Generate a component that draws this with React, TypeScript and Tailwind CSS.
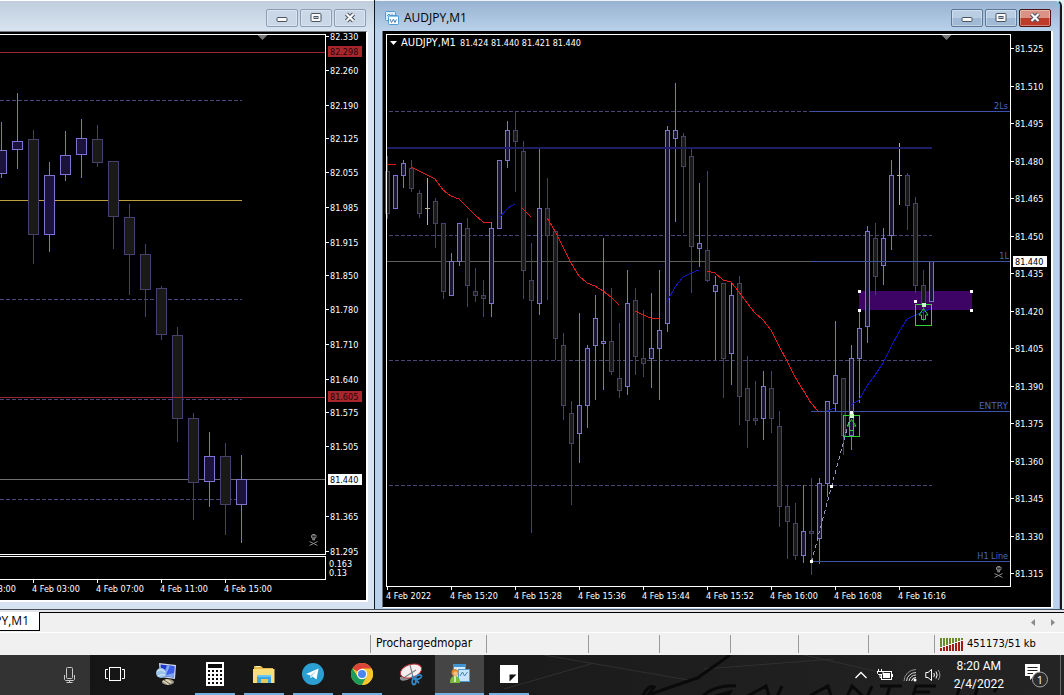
import React from 'react';

type Candle = [x: number, high: number, top: number, bottom: number, low: number, kind: 'u' | 'd' | 'n'];
type Tick = [label: string, y: number];

const LEFT_CANDLES: Candle[] = [
  [1, 122, 150, 173, 177, 'u'], [17, 93, 141, 149, 168, 'u'], [33, 130, 139, 234, 263, 'd'],
  [49, 162, 175, 234, 251, 'u'], [65, 131, 155, 174, 180, 'u'], [81, 119, 138, 154, 177, 'u'],
  [97, 125, 139, 162, 166, 'd'], [113, 161, 161, 216, 248, 'd'], [129, 204, 217, 254, 294, 'd'],
  [145, 244, 254, 289, 316, 'd'], [161, 286, 288, 334, 339, 'd'], [177, 327, 335, 418, 441, 'd'],
  [193, 413, 418, 482, 519, 'd'], [209, 432, 456, 481, 506, 'u'], [225, 443, 456, 504, 534, 'd'],
  [241, 455, 479, 504, 542, 'u'],
];

const RIGHT_CANDLES: Candle[] = [
  [387, 156, 171, 213, 218, 'd'], [395, 175, 175, 208, 208, 'u'], [403, 160, 163, 175, 187, 'u'],
  [411, 160, 168, 188, 191, 'd'], [419, 190, 193, 213, 217, 'd'], [427, 178, 208, 208, 224, 'n'],
  [435, 198, 201, 223, 247, 'd'], [443, 223, 223, 291, 298, 'd'], [451, 253, 261, 295, 295, 'u'],
  [459, 223, 223, 261, 265, 'u'], [467, 218, 228, 285, 306, 'd'], [475, 268, 291, 295, 301, 'd'],
  [483, 280, 295, 298, 316, 'd'], [491, 222, 228, 303, 316, 'u'], [499, 160, 160, 228, 228, 'u'],
  [507, 121, 130, 160, 167, 'u'], [515, 111, 130, 141, 191, 'd'], [523, 141, 151, 270, 298, 'd'],
  [531, 243, 280, 300, 532, 'd'], [539, 148, 208, 303, 314, 'u'], [547, 178, 208, 235, 299, 'd'],
  [555, 231, 231, 338, 359, 'd'], [563, 333, 345, 405, 419, 'd'], [571, 401, 413, 443, 504, 'd'],
  [579, 313, 405, 433, 462, 'u'], [587, 345, 348, 405, 427, 'u'], [595, 295, 318, 345, 399, 'u'],
  [603, 238, 341, 343, 389, 'u'], [611, 288, 341, 371, 374, 'd'], [619, 323, 378, 390, 397, 'd'],
  [627, 270, 303, 386, 394, 'u'], [635, 288, 300, 356, 374, 'd'], [643, 310, 358, 363, 376, 'd'],
  [651, 293, 348, 358, 387, 'u'], [659, 270, 330, 348, 399, 'u'], [667, 126, 130, 323, 331, 'u'],
  [675, 83, 130, 138, 221, 'u'], [683, 133, 136, 166, 232, 'd'], [691, 149, 156, 246, 292, 'd'],
  [699, 183, 243, 248, 266, 'u'], [707, 171, 250, 280, 281, 'd'], [715, 276, 285, 291, 359, 'u'],
  [723, 283, 283, 358, 397, 'd'], [731, 282, 295, 353, 384, 'u'], [739, 276, 283, 396, 424, 'd'],
  [747, 356, 388, 420, 447, 'd'], [755, 381, 418, 420, 424, 'd'], [763, 371, 386, 418, 439, 'u'],
  [771, 371, 388, 418, 432, 'd'], [779, 411, 426, 506, 526, 'd'], [787, 486, 506, 521, 558, 'd'],
  [795, 503, 523, 555, 559, 'd'], [803, 485, 531, 555, 562, 'u'], [811, 478, 531, 533, 574, 'd'],
  [819, 478, 483, 538, 563, 'u'], [827, 401, 401, 483, 496, 'u'], [835, 321, 375, 403, 411, 'u'],
  [843, 378, 378, 435, 454, 'd'], [851, 345, 358, 435, 449, 'u'], [859, 311, 328, 358, 402, 'u'],
  [867, 226, 231, 326, 342, 'u'], [875, 223, 238, 276, 294, 'd'], [883, 228, 238, 265, 284, 'u'],
  [891, 160, 175, 235, 249, 'u'], [899, 143, 175, 175, 204, 'n'], [907, 173, 175, 205, 229, 'd'],
  [915, 197, 203, 285, 292, 'd'], [923, 270, 285, 304, 320, 'd'], [931, 261, 261, 301, 301, 'u'],
];

const LEFT_TICKS: Tick[] = [
  ['82.330', 36], ['82.260', 70], ['82.190', 105], ['82.125', 138], ['82.055', 172], ['81.985', 207],
  ['81.915', 242], ['81.850', 275], ['81.780', 309], ['81.710', 344], ['81.640', 379], ['81.575', 412],
  ['81.505', 446], ['81.365', 516], ['81.295', 551],
];

const RIGHT_TICKS: Tick[] = [
  ['81.525', 48], ['81.510', 86], ['81.495', 123], ['81.480', 161], ['81.465', 198], ['81.450', 236],
  ['81.435', 273], ['81.420', 311], ['81.405', 348], ['81.390', 386], ['81.375', 423], ['81.360', 461],
  ['81.345', 498], ['81.330', 536], ['81.315', 573],
];

const LEFT_TIMES: [string, number][] = [
  ['3 Feb 23:00', -31], ['4 Feb 03:00', 33], ['4 Feb 07:00', 97], ['4 Feb 11:00', 161], ['4 Feb 15:00', 225],
];

const RIGHT_TIMES: [string, number][] = [
  ['4 Feb 2022', 387], ['4 Feb 15:20', 451], ['4 Feb 15:28', 515], ['4 Feb 15:36', 579], ['4 Feb 15:44', 643],
  ['4 Feb 15:52', 707], ['4 Feb 16:00', 771], ['4 Feb 16:08', 835], ['4 Feb 16:16', 899],
];

const CHART_TEXT = "font-['DejaVu_Sans_Condensed','DejaVu_Sans',sans-serif] text-[9px]";

const COLORS = {
  u: { line: '#7d72d6', fill: '#1b1338' },
  d: { line: '#45406e', fill: '#1a1a1c' },
  n: { line: '#b5b596', fill: '#b5b596' },
};

function Candles({ data, half }: { data: Candle[]; half: number }) {
  return (
    <g shapeRendering="crispEdges">
      {data.map(([x, high, top, bottom, low, kind]) => {
        const c = COLORS[kind];
        return (
          <g key={x}>
            <rect x={x} y={high} width={1} height={low - high + 1} fill={c.line} />
            {kind === 'n' ? (
              <rect x={x - 2} y={top} width={5} height={1} fill={c.line} />
            ) : (
              <>
                <rect x={x - half} y={top} width={half * 2 + 1} height={bottom - top + 1} fill={c.line} />
                <rect x={x - half + 1} y={top + 1} width={half * 2 - 1} height={Math.max(bottom - top - 1, 0)} fill={c.fill} />
              </>
            )}
          </g>
        );
      })}
    </g>
  );
}

function PriceScale({ x, ticks }: { x: number; ticks: Tick[] }) {
  return (
    <g fill="#fff">
      {ticks.map(([label, y]) => (
        <g key={label}>
          <rect x={x} y={y} width={3} height={1} />
          <text x={x + 4} y={y + 4}>{label}</text>
        </g>
      ))}
    </g>
  );
}

function PriceTag({ x, y, label, fill, ink }: { x: number; y: number; label: string; fill: string; ink: string }) {
  return (
    <g>
      <rect x={x} y={y - 5} width={34} height={11} fill={fill} />
      <text x={x + 2} y={y + 4} fill={ink}>{label}</text>
    </g>
  );
}

function HLine({ x1, x2, y, color, h = 1 }: { x1: number; x2: number; y: number; color: string; h?: number }) {
  return <rect x={x1} y={y} width={x2 - x1} height={h} fill={color} shapeRendering="crispEdges" />;
}

function Dashes({ x1, x2, ys }: { x1: number; x2: number; ys: number[] }) {
  return (
    <>
      {ys.map((y) => (
        <path key={y} d={`M${x1} ${y + 0.5}H${x2}`} stroke="#4a4678" strokeDasharray="4 2" />
      ))}
    </>
  );
}

function Skull({ x, y }: { x: number; y: number }) {
  return (
    <g transform={`translate(${x} ${y})`} fill="none" stroke="#8a8a8a">
      <path d="M2.5 3.5V1.500L3.500.5H6L7 1.500V3.500L5.500 4.500V6H3.800V4.500Z" fill="#5c5c5c" />
      <path d="M3.500 2.500h1M5.500 2.500h1" stroke="#000" />
      <path d="M.5 7.500L8.500 11.500M.5 11.500L8.500 7.500" />
    </g>
  );
}

function EntryArrow({ x, y }: { x: number; y: number }) {
  return (
    <g transform={`translate(${x} ${y})`} fill="none" stroke="#2fd43c">
      <rect x=".5" y=".5" width="16" height="21" />
      <path d="M8.500 4.500L13 11H10.500V15.500H6.500V11H4Z" />
      <rect x="7" y="-1" width="4" height="4" fill="#c8ffc8" stroke="none" />
    </g>
  );
}

function LeftChart() {
  return (
    <svg viewBox="0 32 366 568" className={`block h-auto w-full bg-black ${CHART_TEXT}`} role="img" aria-label="Hourly chart">
      <HLine x1={0} x2={325} y={52} color="#9c2630" />
      <HLine x1={0} x2={242} y={200} color="#c0a03c" />
      <Dashes x1={0} x2={242} ys={[100, 299, 399, 499]} />
      <HLine x1={0} x2={325} y={479} color="#6e6e70" />
      <Candles data={LEFT_CANDLES} half={5} />
      <HLine x1={0} x2={325} y={397} color="#9c2630" />
      <path d="M257.500 35H267.500L262.500 40Z" fill="#777" />
      <Skull x={309} y={534} />
      <g fill="#fff" shapeRendering="crispEdges">
        <rect x="0" y="34" width="326" height="1" />
        <rect x="325" y="34" width="1" height="521" />
        <rect x="0" y="554" width="326" height="1" />
        <rect x="0" y="556" width="326" height="1" />
        <rect x="325" y="556" width="1" height="24" />
        <rect x="0" y="579" width="326" height="1" />
      </g>
      <PriceScale x={326} ticks={LEFT_TICKS} />
      <PriceTag x={328} y={51} label="82.298" fill="#a8262c" ink="#2a0508" />
      <PriceTag x={328} y={396} label="81.605" fill="#a8262c" ink="#2a0508" />
      <PriceTag x={328} y={479} label="81.440" fill="#fff" ink="#000" />
      <g fill="#fff">
        <text x="329" y="567">0.163</text>
        <text x="329" y="576">0.13</text>
        {LEFT_TIMES.map(([label, x]) => (
          <g key={label}>
            <rect x={x} y="580" width="1" height="3" />
            <text x={x - 1} y="592">{label}</text>
          </g>
        ))}
      </g>
    </svg>
  );
}

const RED_LINES = [
  '387,164 391,164 396,165',
  '411,167 419,171 427,175 435,179 443,190 451,196 459,199 467,207 475,215 483,222 491,222',
  '521,207 526,212 531,217',
  '547,218 555,231 563,247 571,263 579,276 587,283 595,286 603,291 611,297 619,305',
  '635,311 643,315 651,318 660,319',
  '707,271 715,273 723,280 731,282 739,292 747,303 755,313 763,320 771,330 779,346 787,361 795,377 803,390 811,403 818,411',
];

const BLUE_LINES = [
  '499,218 507,209 511,206 515,204',
  '667,302 675,287 683,277 691,273 699,270',
  '827,411 835,408',
  '851,405 859,400 867,386 875,375 883,363 891,347 899,332 907,319 915,315 923,312 931,309',
];

const HANDLES = [[859, 291], [971, 291], [859, 310], [971, 310], [915, 301], [811, 561], [831, 486], [851, 412]];

function RightChart() {
  return (
    <svg viewBox="383 31 668 576" className={`block h-auto w-full bg-black ${CHART_TEXT}`} role="img" aria-label="AUDJPY one minute chart">
      <rect x="859" y="291" width="113" height="19" fill="#3d0466" />
      <Dashes x1={389} x2={811} ys={[111]} />
      <Dashes x1={389} x2={932} ys={[235, 360, 485]} />
      <HLine x1={387} x2={811} y={261} color="#5c625c" />
      <Candles data={RIGHT_CANDLES} half={2} />
      <HLine x1={387} x2={932} y={147} h={2} color="#1e1e66" />
      <g fill="none" stroke="#e21c1c" shapeRendering="crispEdges">
        {RED_LINES.map((p) => <polyline key={p} points={p} />)}
      </g>
      <g fill="none" stroke="#1414c4" shapeRendering="crispEdges">
        {BLUE_LINES.map((p) => <polyline key={p} points={p} />)}
      </g>
      {[111, 261, 411, 561].map((y) => <HLine key={y} x1={811} x2={1010} y={y} color="#4052a8" />)}
      <path d="M811.500 561.500L851.500 412" stroke="#9a94c0" strokeDasharray="4 3" fill="none" shapeRendering="crispEdges" />
      <g fill="#fff">
        {HANDLES.map(([x, y]) => <rect key={`${x}-${y}`} x={x - 1} y={y - 1} width="3" height="3" />)}
      </g>
      <EntryArrow x={915} y={304} />
      <EntryArrow x={843} y={415} />
      <g fill="#4a66c0" textAnchor="end">
        <text x="1008" y="109">2Ls</text>
        <text x="1009" y="259">1L</text>
        <text x="1008" y="409" className="font-['DejaVu_Sans',sans-serif]">ENTRY</text>
        <text x="1008" y="559">H1 Line</text>
      </g>
      <path d="M941.500 35H951.500L946.500 40Z" fill="#777" />
      <Skull x={994} y={566} />
      <g fill="#fff" shapeRendering="crispEdges">
        <rect x="386" y="34" width="625" height="1" />
        <rect x="386" y="34" width="1" height="553" />
        <rect x="1010" y="34" width="1" height="553" />
        <rect x="386" y="586" width="625" height="1" />
      </g>
      <path d="M390 41H397L393.500 45Z" fill="#fff" />
      <text x="401" y="46" fill="#fff" className="font-['DejaVu_Sans',sans-serif] text-[10px]">AUDJPY,M1</text>
      <text x="460" y="46" fill="#fff">81.424 81.440 81.421 81.440</text>
      <PriceScale x={1011} ticks={RIGHT_TICKS} />
      <PriceTag x={1013} y={261} label="81.440" fill="#fff" ink="#000" />
      <g fill="#fff">
        {RIGHT_TIMES.map(([label, x]) => (
          <g key={label}>
            <rect x={x} y="587" width="1" height="3" />
            <text x={x - 1} y="599">{label}</text>
          </g>
        ))}
      </g>
    </svg>
  );
}

function MinimizeGlyph() {
  return (
    <svg width="12" height="12" viewBox="0 0 12 12" aria-hidden="true">
      <rect x="1" y="5.500" width="10" height="4" rx="1" fill="#fafafa" stroke="#4b5260" />
    </svg>
  );
}

function RestoreGlyph() {
  return (
    <svg width="12" height="12" viewBox="0 0 12 12" aria-hidden="true">
      <rect x="1" y="1.500" width="10" height="8" rx="1" fill="#fafafa" stroke="#4b5260" />
      <rect x="4" y="4.500" width="4" height="2" fill="#b9c9dc" stroke="#4b5260" />
    </svg>
  );
}

function CloseGlyph() {
  return (
    <svg width="12" height="12" viewBox="0 0 12 12" aria-hidden="true">
      <path d="M2.500 2L9.500 9M9.500 2L2.500 9" stroke="#4b5260" strokeWidth="4.200" />
      <path d="M2.500 2L9.500 9M9.500 2L2.500 9" stroke="#fafafa" strokeWidth="2.200" />
    </svg>
  );
}

function WindowButtons({ active = false }: { active?: boolean }) {
  const base = 'flex h-[18px] w-8 items-center justify-center rounded-[2px] border shadow-[inset_0_0_0_1px_rgba(255,255,255,0.35)]';
  const plain = active ? 'border-[#5d7896] bg-linear-to-b from-[#b9cde3] from-50% to-[#a0b9d5] to-50%' : 'border-[#8c9db4] bg-[#c9d7e7]';
  const close = active ? 'border-[#4a1512] bg-linear-to-b from-[#dc9186] from-50% to-[#bd3b28] to-50%' : plain;
  return (
    <div className="flex gap-[2px]">
      <button type="button" aria-label="Minimize" className={`${base} ${plain}`}><MinimizeGlyph /></button>
      <button type="button" aria-label="Restore" className={`${base} ${plain}`}><RestoreGlyph /></button>
      <button type="button" aria-label="Close" className={`${base} ${close}`}><CloseGlyph /></button>
    </div>
  );
}

function ChartIcon() {
  return (
    <svg width="14" height="14" viewBox="0 0 14 14" aria-hidden="true">
      <rect x=".5" y=".5" width="10" height="9" rx="1" fill="#dff0fb" stroke="#4f9ad0" />
      <path d="M2 5L4 3L5.500 5L7.500 3" fill="none" stroke="#4f9ad0" />
      <rect x="3.500" y="4.500" width="10" height="9" rx="1" fill="#fff" stroke="#4f9ad0" />
      <path d="M4 5.500h9" stroke="#8cc4ea" />
      <path d="M5 8l1.500 3.500L8.500 8l1.500 3.500 1.500-3" fill="none" stroke="#4a7fb0" />
    </svg>
  );
}

function LeftWindow() {
  return (
    <section className="border-r border-[#11151c] bg-[#d7e3f1] pb-[7px] pr-[6px]">
      <header className="-mr-[6px] flex h-[31px] items-center justify-end border-t border-white bg-linear-to-b from-[#bfcddc] to-[#d8e4f1] pr-2 pt-[3px]">
        <WindowButtons />
      </header>
      <div className="border-b-2 border-r-2 border-t border-b-white border-r-white border-t-[#77797c]">
        <LeftChart />
      </div>
    </section>
  );
}

function RightWindow() {
  return (
    <section className="mr-[2px] rounded-t-md border-r-2 border-t border-r-[#15191f] border-t-[#eef4fa] bg-[#b9d1ea]">
      <div className="flex h-full flex-col rounded-tr-md border-r border-[#58c4ec] bg-linear-to-b from-[#98b3d1] to-[#b9d1ea] to-5%">
        <header className="flex h-[30px] items-center justify-between pl-[10px] pr-[8px] pt-[3px]">
          <h1 className="flex items-center gap-[5px] font-['Open_Sans','Noto_Sans',sans-serif] text-[12px] leading-4 text-black">
            <ChartIcon />
            AUDJPY,M1
          </h1>
          <WindowButtons active />
        </header>
        <div className="ml-[7px] mr-[6px] border-b border-l border-r-2 border-b-white border-l-[#6c7178] border-r-white">
          <RightChart />
        </div>
      </div>
    </section>
  );
}

function TabBar() {
  return (
    <nav aria-label="Chart tabs" className="flex h-[21px] items-start justify-between border-b border-b-white bg-[#f0f0f0]">
      <button type="button" className="flex h-[19px] w-10 items-center overflow-hidden border-b border-r border-black bg-white font-['Open_Sans','Noto_Sans',sans-serif] text-[12px] leading-4 text-black">
        <span className="flex w-full justify-end pr-[10px]">AUDJPY,M1</span>
      </button>
      <div className="flex h-full flex-1 items-center justify-end gap-[14px] border-t border-black pr-[9px]">
        <button type="button" aria-label="Scroll tabs left"><svg width="5" height="7" viewBox="0 0 5 7"><path d="M4 0V7L0 3.500Z" fill="#8a8a8a" /></svg></button>
        <button type="button" aria-label="Scroll tabs right"><svg width="5" height="7" viewBox="0 0 5 7"><path d="M1 0V7L5 3.500Z" fill="#8a8a8a" /></svg></button>
      </div>
    </nav>
  );
}

const SIGNAL_BARS = [0, 1, 2, 3, 4, 5, 6, 7];

function StatusBar() {
  const cell = 'h-[18px] border-l border-[#9a9a9a]';
  return (
    <footer className="grid h-[22px] grid-cols-[370fr_116fr_102fr_71fr_71fr_68fr_70fr_66fr_130fr] items-center bg-[#f0f0f0] font-['DejaVu_Sans_Condensed','DejaVu_Sans',sans-serif] text-[11px] leading-4 text-black">
      <div />
      <div className={`${cell} pl-[5px] text-[12px]`}>Prochargedmopar</div>
      <div className={cell} />
      <div className={cell} />
      <div className={cell} />
      <div className={cell} />
      <div className={cell} />
      <div className={cell} />
      <div className={`${cell} flex items-center gap-1 whitespace-nowrap pl-[5px]`}>
        <svg width="23" height="13" viewBox="0 0 23 13" aria-hidden="true">
          {SIGNAL_BARS.map((i) => (
            <g key={i}>
              <rect x={i * 3} y="0" width="2" height={9 - i} fill="#6a8a2c" />
              <rect x={i * 3} y={10 - i} width="2" height={3 + i} fill="#a01c14" />
            </g>
          ))}
        </svg>
        451173/51 kb
      </div>
    </footer>
  );
}

function TaskButton({ label, open, active, children }: { label: string; open?: boolean; active?: boolean; children: React.ReactNode }) {
  return (
    <button type="button" aria-label={label} className={`flex h-10 w-[49px] flex-col items-center ${active ? 'bg-[#454545]' : ''}`}>
      <span className="flex h-[38px] items-center">{children}</span>
      {open && <span className={`h-[2px] bg-[#76b0e0] ${active ? 'w-full' : 'w-10'}`} />}
    </button>
  );
}

function Taskbar() {
  return (
    <div className="relative flex h-10 items-stretch overflow-hidden bg-linear-to-r from-[#141414] via-[#1b1b1c] to-[#242424] text-white">
      <svg className="absolute inset-y-0 right-0 h-10 w-[560px]" viewBox="0 0 560 40" aria-hidden="true">
        <path d="M40 0L190 26M200 14L330 4M0 34L90 8M300 0L380 18" stroke="#303032" fill="none" />
        <path d="M138 42C142 34 146 30 150 32L144 40L196 22M192 24L226 0" stroke="#0a0a0a" strokeWidth="3" fill="none" />
        <path d="M196 44C206 32 222 30 232 31M208 42L226 37L222 44M238 44L262 31L266 44M278 31L272 44M300 44L324 31L328 44M342 44L348 31L362 44L368 31M376 31H398M386 31L382 44M408 44L412 31H432M410 37H426M456 31L452 44M470 44L474 31H494L490 37" stroke="#0a0a0a" strokeWidth="3" fill="none" />
      </svg>
      <button type="button" aria-label="Search by voice" className="flex w-[90px] items-center justify-end bg-[#333] pr-[14px]">
        <svg width="13" height="18" viewBox="0 0 13 18" fill="none" stroke="#c8c8c8">
          <rect x="3.500" y="1.500" width="6" height="11" rx="1" />
          <path d="M1.500 9V13.500L2.500 14.500H10.500L11.500 13.500V9M6.500 14.500V16.500M3.500 16.500H9.500" />
        </svg>
      </button>
      <TaskButton label="Task View">
        <svg width="20" height="16" viewBox="0 0 20 16" fill="none" stroke="#fff">
          <rect x="4.500" y="1.500" width="11" height="13" />
          <path d="M3 3.500H.5V12.500H3M17 3.500H19.500V12.500H17" />
        </svg>
      </TaskButton>
      <div className="ml-[2px] flex">
        <TaskButton label="Remote Desktop">
          <svg width="24" height="24" viewBox="0 0 24 24">
            <path d="M5 1L22 3L21 17L6 15Z" fill="#cfd6e6" />
            <path d="M6.500 2.500L20.500 4.200L19.800 15.500L7.500 14Z" fill="#1d36cf" />
            <path d="M13 3.200L20.500 4.200L19.800 15.500L9 14Z" fill="#7fa4f2" />
            <path d="M16 3.500L20.500 4.200L20 11L12 13Z" fill="#3d5fe6" />
            <circle cx="7" cy="11" r="5" fill="#9cc3ea" />
            <path d="M3 9.500Q7 6 11 10M4 14Q8 12 11 13" stroke="#dceefb" fill="none" />
            <ellipse cx="14" cy="20" rx="6" ry="3" fill="#9a9488" />
            <path d="M8 19L13 17L18 20L14 23Z" fill="#e0d4b4" />
            <path d="M10 18L16 22" stroke="#5f5a50" />
          </svg>
        </TaskButton>
        <TaskButton label="Calculator" open>
          <svg width="18" height="24" viewBox="0 0 18 24">
            <rect width="18" height="24" fill="#fff" />
            <rect x="2" y="2" width="14" height="4" fill="#0b0b0b" />
            {[9, 13, 17, 21].map((y) => [3, 7, 11, 15].map((x) => (
              <rect key={`${x}-${y}`} x={x - 1} y={y - 1} width="2" height="2" fill="#0b0b0b" />
            )))}
          </svg>
        </TaskButton>
        <TaskButton label="File Explorer" open>
          <svg width="22" height="19" viewBox="0 0 22 19">
            <path d="M1 1H8L10 3H20V8H1Z" fill="#e6b94a" />
            <path d="M3 1.500H7" stroke="#fff4c4" />
            <path d="M0 4H21.500V18H0Z" fill="#f9dc7c" />
            <path d="M4 10H18V18H15V14H8V18H4Z" fill="#3aa6dc" />
            <path d="M4 10H18V12H4Z" fill="#6cc4ec" />
            <path d="M8 14H15V18H8Z" fill="#e9c65c" />
          </svg>
        </TaskButton>
        <TaskButton label="Telegram" open>
          <svg width="22" height="22" viewBox="0 0 22 22">
            <circle cx="11" cy="11" r="11" fill="#2b9fd2" />
            <path d="M4 11L16.500 5.500L14.500 16.500L10.500 13.500L8.800 15.300L8.200 12.300Z" fill="#fff" />
            <path d="M8.200 12.300L14.500 7.500L10 13.200L8.800 15.300Z" fill="#b8d9ea" />
          </svg>
        </TaskButton>
        <TaskButton label="Chrome" open>
          <svg width="22" height="22" viewBox="0 0 22 22">
            <circle cx="11" cy="11" r="11" fill="#f7c52e" />
            <path d="M11 11L1.470 5.500A11 11 0 0 1 20.530 5.500Z" fill="#dc4437" />
            <path d="M1.470 5.500A11 11 0 0 0 11 22L15.500 13.500L11 11L6.500 13.500Z" fill="#1d9b58" />
            <path d="M11 5.500H20.530A11 11 0 0 1 11 22L15.700 13.700Z" fill="#f7c52e" />
            <circle cx="11" cy="11" r="5.200" fill="#fff" />
            <circle cx="11" cy="11" r="4" fill="#4a86ee" />
          </svg>
        </TaskButton>
        <TaskButton label="Snipping Tool">
          <svg width="24" height="24" viewBox="0 0 24 24">
            <path d="M1 15C0 20 6 19 10 17L12 14Z" fill="#8d8f94" />
            <ellipse cx="12" cy="9" rx="11" ry="6.500" transform="rotate(-18 12 9)" fill="#f4eeee" stroke="#b5323a" />
            <path d="M11 3L14 15M6 15L17 8" stroke="#7e8388" strokeWidth="1.200" />
            <g fill="none" stroke="#2f86c6" strokeWidth="1.800">
              <ellipse cx="19.500" cy="15" rx="3" ry="1.800" transform="rotate(-25 19.500 15)" />
              <ellipse cx="15" cy="19.500" rx="1.800" ry="3" />
              <path d="M13 14L20 21" />
            </g>
          </svg>
        </TaskButton>
        <TaskButton label="MetaTrader" open active>
          <svg width="20" height="20" viewBox="0 0 20 20">
            <rect x="3.500" y=".5" width="12" height="12" fill="#d6ebfa" stroke="#3f93d2" />
            <path d="M4 2H15" stroke="#3f93d2" strokeWidth="2" />
            <path d="M5 5H14V17H5Z" fill="#f4faff" />
            <rect x="8.500" y="5.500" width="11" height="12" fill="#c9e4f8" stroke="#4c9ad4" />
            <path d="M10 12L12.500 8L14.500 12L17.500 8" fill="none" stroke="#3b83bd" />
            <path d="M0 19C0 13.500 2.500 12 5 12S10 13.500 10 19Z" fill="#7cb83c" />
            <path d="M5 12V18" stroke="#f2f6e4" strokeWidth="1.500" />
            <circle cx="5" cy="8.500" r="3.500" fill="#d98a36" />
            <circle cx="5.500" cy="9.500" r="2.200" fill="#f0c080" />
          </svg>
        </TaskButton>
        <TaskButton label="Sticky Notes" open>
          <svg width="18" height="18" viewBox="0 0 18 18">
            <rect width="18" height="18" fill="#fff" />
            <path d="M9.500 16.500V9.500H16.500Z" fill="#111" />
          </svg>
        </TaskButton>
      </div>
      <div className="relative ml-auto flex items-center">
        <button type="button" aria-label="Show hidden icons" className="mr-[9px]">
          <svg width="14" height="8" viewBox="0 0 14 8" fill="none" stroke="#fff" strokeWidth="1.300"><path d="M1.500 7L7 1.500L12.500 7" /></svg>
        </button>
        <button type="button" aria-label="Battery" className="mr-[10px]">
          <svg width="16" height="13" viewBox="0 0 16 13" fill="none" stroke="#fff">
            <rect x="4.500" y="2.500" width="10" height="8" />
            <rect x="6" y="4" width="7" height="5" fill="#fff" stroke="none" />
            <path d="M15.500 5V8" />
            <path d="M0 2.500H6V4.500L5 5.500H1.500L.5 4.500V2.500Z" fill="#1c1c1c" />
            <path d="M1.500 0V2M4.500 0V2M3 5.500V8.500H5" />
          </svg>
        </button>
        <button type="button" aria-label="Network" className="mr-[8px]">
          <svg width="14" height="14" viewBox="0 0 14 14" fill="none">
            <path d="M1 13A12 12 0 0 1 13 1.500" stroke="#8f8f8f" />
            <path d="M3.500 13A9.500 9.500 0 0 1 13 4.500M6 13A7 7 0 0 1 13 7" stroke="#d8d8d8" />
            <path d="M8.500 13A4.500 4.500 0 0 1 13 9.500" stroke="#fff" />
            <circle cx="12" cy="12" r="1.500" fill="#fff" />
          </svg>
        </button>
        <button type="button" aria-label="Volume" className="mr-[12px]">
          <svg width="17" height="14" viewBox="0 0 17 14" fill="none" stroke="#fff">
            <path d="M.8 4.500H3L6.500 1.500V12.500L3 9.500H.8Z" />
            <path d="M8.800 5Q10 7 8.800 9M11 3.500Q13.300 7 11 10.500" />
            <path d="M13.200 2Q16.600 7 13.200 12" stroke="#9a9a9a" />
          </svg>
        </button>
        <div className="mr-[20px] flex flex-col items-center font-['Roboto','Open_Sans',sans-serif] text-[12px] leading-[18px]">
          <time>8:20 AM</time>
          <time>2/4/2022</time>
        </div>
        <button type="button" aria-label="1 new notification" className="relative mr-[12px] h-[26px] w-6">
          <svg width="24" height="26" viewBox="0 0 24 26">
            <path d="M1 2H16V14H10L6 18V14H1Z" fill="#fff" />
            <path d="M3.500 5.500H13.500M3.500 8.500H13.500M3.500 11.500H9" stroke="#222" />
            <circle cx="16" cy="17.500" r="7.500" fill="#2c2c2c" stroke="#a4a4a4" />
          </svg>
          <span className="absolute bottom-[2px] right-[4px] w-2 text-center font-['Open_Sans','Noto_Sans',sans-serif] text-[11px] leading-3">1</span>
        </button>
        <span className="h-10 w-1 border-l border-[#6a6a6a]" />
      </div>
    </div>
  );
}

export default function App() {
  return (
    <div className="min-h-screen bg-[#f0f0f0]">
      <main className="grid grid-cols-[375fr_689fr] items-stretch border-b border-[#4a4f58] bg-[#e9eef2]">
        <LeftWindow />
        <RightWindow />
      </main>
      <div className="h-[2px] bg-[#e4e8ee]" />
      <TabBar />
      <StatusBar />
      <Taskbar />
    </div>
  );
}
